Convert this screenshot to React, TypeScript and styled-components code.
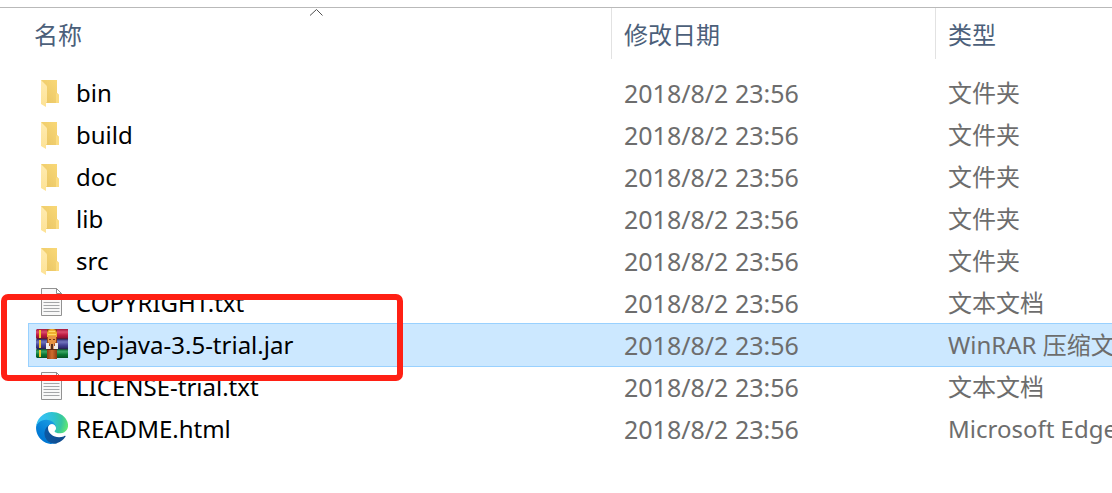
import React from 'react';
import styled, { createGlobalStyle } from 'styled-components';

const GlobalStyle = createGlobalStyle`
  * { box-sizing: border-box; }
  body {
    margin: 0;
    background: #fff;
    overflow-x: hidden;
    font-family: 'Noto Sans', 'Noto Sans CJK SC', sans-serif;
  }
`;

const Pane = styled.main`
  margin-top: 7px;
  padding-left: 29px;
  border-top: 1px solid #b9b9b9;
`;

const FileTable = styled.table`
  width: 100%;
  table-layout: fixed;
  border-collapse: collapse;
  font-size: 24px;
  line-height: 32px;
`;

const HeadCell = styled.th<{ $width?: number }>`
  position: relative;
  width: ${({ $width }) => ($width ? `${$width}px` : 'auto')};
  height: 64px;
  padding: 0;
  vertical-align: top;
  text-align: left;
`;

const HeadButton = styled.button<{ $indent: number; $divider?: boolean }>`
  display: block;
  width: 100%;
  height: 51px;
  padding: 2px 0 0 ${({ $indent }) => $indent}px;
  border: 0;
  border-right: ${({ $divider }) => ($divider ? '1px solid #e2e2e2' : '0')};
  background: none;
  color: #4c607a;
  font: inherit;
  font-weight: 400;
  text-align: left;
  white-space: nowrap;
`;

const SortCaret = styled.svg`
  position: absolute;
  top: 0;
  left: 280px;
`;

const Row = styled.tr<{ $selected?: boolean }>`
  height: 42px;
  background: ${({ $selected }) => ($selected ? '#cce8ff' : 'transparent')};
  outline: ${({ $selected }) => ($selected ? '1px solid #99d1ff' : 'none')};
`;

const NameCell = styled.td`
  position: relative;
  padding: 0 0 0 7px;
  color: #000;
`;

const FileName = styled.div`
  display: flex;
  align-items: center;
  gap: 8px;
  white-space: nowrap;
`;

const DetailCell = styled.td`
  padding: 0 0 0 12px;
  overflow: hidden;
  color: #6d6d6d;
  white-space: nowrap;
`;

const DateCell = styled(DetailCell)`
  font-size: 25px;
`;

const Icon = styled.svg`
  flex: none;
  width: 32px;
  height: 32px;
  margin-bottom: 2px;
`;

const Marker = styled.div`
  position: absolute;
  z-index: 1;
  top: -30px;
  left: -28px;
  width: 402px;
  height: 87px;
  border: 6px solid #ff2014;
  border-radius: 7px;
  pointer-events: none;
`;

const FolderIcon = () => (
  <Icon viewBox="0 0 32 32" aria-hidden="true">
    <defs>
      <linearGradient id="folderBack" x1="0" y1="1" x2="1" y2="0">
        <stop offset="0" stopColor="#e8c463" />
        <stop offset="1" stopColor="#fad978" />
      </linearGradient>
      <linearGradient id="folderFront" x1="0" y1="0" x2="0" y2="1">
        <stop offset="0" stopColor="#ffebb0" />
        <stop offset="1" stopColor="#fde295" />
      </linearGradient>
    </defs>
    <path d="M5 4H21V17L23 19V27H6Z" fill="url(#folderBack)" />
    <path d="M21 17L23 19V27H20V18Z" fill="#fbdc82" />
    <path d="M5 4L10 9Q11 10 11 11V26L10 27V31L5 28Z" fill="url(#folderFront)" />
  </Icon>
);

const TextIcon = () => (
  <Icon viewBox="0 0 32 32" aria-hidden="true">
    <path d="M5.5 2.5H20.5L25.5 7.5V29.5H5.5Z" fill="#f8f8f8" stroke="#929292" />
    <path d="M20.5 2.5V7.5H25.5Z" fill="#fff" stroke="#8c8c8c" />
    <path d="M7.5 10.5H23.5M7.5 13.5H23.5M7.5 16.5H23.5M7.5 19.5H23.5M7.5 22.5H23.5M7.5 25.5H23.5" stroke="#a4a6a8" />
  </Icon>
);

const ArchiveIcon = () => (
  <Icon viewBox="0 0 32 32" aria-hidden="true">
    <defs>
      <linearGradient id="bookRed" x1="0" y1="0" x2="0" y2="1">
        <stop offset="0" stopColor="#a3183c" /><stop offset=".3" stopColor="#dc4a6c" /><stop offset=".6" stopColor="#bd1b42" /><stop offset="1" stopColor="#7c1030" />
      </linearGradient>
      <linearGradient id="bookBlue" x1="0" y1="0" x2="0" y2="1">
        <stop offset="0" stopColor="#3a3680" /><stop offset=".3" stopColor="#7274bd" /><stop offset=".6" stopColor="#464497" /><stop offset="1" stopColor="#28215f" />
      </linearGradient>
      <linearGradient id="bookGreen" x1="0" y1="0" x2="0" y2="1">
        <stop offset="0" stopColor="#0a6a33" /><stop offset=".3" stopColor="#3aa463" /><stop offset=".6" stopColor="#0b7a37" /><stop offset="1" stopColor="#075024" />
      </linearGradient>
      <linearGradient id="strap" x1="0" y1="0" x2="1" y2="0">
        <stop offset="0" stopColor="#8f3f14" /><stop offset=".5" stopColor="#cf6c2e" /><stop offset="1" stopColor="#8a3b12" />
      </linearGradient>
    </defs>
    <path d="M1 1H32V11H1L0 10V2Z" fill="url(#bookRed)" />
    <path d="M1 11H32V21H1L0 20V12Z" fill="url(#bookBlue)" />
    <path d="M1 21H32V30H1L0 29V22Z" fill="url(#bookGreen)" />
    <path d="M0 11H32M0 21H32" stroke="#291f35" strokeOpacity=".7" />
    <path d="M4 2V10M4 12V20M4 22V29" stroke="#f2c629" strokeWidth="2" />
    <path d="M11 1H21V31H11Z" fill="url(#strap)" />
    <path d="M11 9V5Q12 1 16 1Q20 1 21 5V9Z" fill="#efb02f" />
    <path d="M13 3.500H19M12 6.500H20" stroke="#ffd968" />
    <path d="M12 8H20V14L18 16H14L12 14Z" fill="#e89543" />
    <path d="M13 11.500H15M17 11.500H19" stroke="#6e3316" />
    <path d="M10 15H13V18H14V21H10ZM22 15H19V18H18V21H22Z" fill="#f1ece8" />
    <path d="M14 16H18V21H14Z" fill="#dca06c" />
    <path d="M16 16V21" stroke="#59301c" strokeWidth="2" />
    <path d="M11 21.500H21" stroke="#5d2a13" />
  </Icon>
);

const EdgeIcon = () => (
  <Icon viewBox="0 0 256 256" aria-hidden="true">
    <defs>
      <linearGradient id="edgeDark" gradientUnits="userSpaceOnUse" x1="59" y1="177" x2="237" y2="177">
        <stop offset="0" stopColor="#0c59a4" /><stop offset="1" stopColor="#114a8b" />
      </linearGradient>
      <linearGradient id="edgeBlue" gradientUnits="userSpaceOnUse" x1="141" y1="80" x2="42" y2="213">
        <stop offset="0" stopColor="#1b9de2" /><stop offset=".16" stopColor="#1595df" /><stop offset=".67" stopColor="#0680d7" /><stop offset="1" stopColor="#0078d4" />
      </linearGradient>
      <radialGradient id="edgeGreen" gradientUnits="userSpaceOnUse" cx="26" cy="60" r="240">
        <stop offset="0" stopColor="#35c1f1" /><stop offset=".2" stopColor="#34c1ed" /><stop offset=".5" stopColor="#2dc2d0" /><stop offset=".75" stopColor="#36c7a0" /><stop offset="1" stopColor="#66eb6e" />
      </radialGradient>
    </defs>
    <path d="M231 190.500c-3.400 1.800-6.900 3.400-10.500 4.700a102 102 0 0 1-35.900 6.400c-47.300 0-88.500-32.500-88.500-74.300 0-11.400 6.400-21.900 16.400-27.300-42.800 1.800-53.800 46.400-53.800 72.500 0 74 68.100 81.400 82.800 81.400 7.900 0 19.800-2.300 27-4.600l1.300-.4a128 128 0 0 0 66.600-52.800 4 4 0 0 0-5.400-5.600z" fill="url(#edgeDark)" />
    <path d="M105.700 241.400a79.200 79.200 0 0 1-22.700-21.300 80.700 80.700 0 0 1 29.500-120c3.200-1.500 8.500-4.100 15.600-4a32.400 32.400 0 0 1 25.700 13c4.100 5.500 6.400 12.100 6.500 18.900 0-.2 24.500-79.600-80-79.600-43.900 0-80 41.700-80 78.200 0 19.300 4.200 38.400 12.500 56a128 128 0 0 0 156.400 67.100 75.500 75.500 0 0 1-62.300-7.900z" fill="url(#edgeBlue)" />
    <path d="M152.300 148.900c-.9 1-3.400 2.500-3.400 5.700 0 2.600 1.700 5.200 4.800 7.300 14.400 10.100 41.700 8.700 41.800 8.700 10.700 0 21.300-2.900 30.500-8.300a61.900 61.900 0 0 0 30.400-53.300c.3-22.400-8-37.300-11.300-43.900C223.800 23.900 177.700 0 127.600 0 57.100 0 .2 57.200.2 127.700c.5-36.500 36.800-66 80-66 3.500 0 23.500.3 42 10.100 16.300 8.600 24.900 19 30.800 29.300 6.200 10.700 7.300 24.100 7.300 29.500 0 5.300-2.700 13.300-8 18.300z" fill="url(#edgeGreen)" />
  </Icon>
);

const icons = { folder: FolderIcon, text: TextIcon, archive: ArchiveIcon, edge: EdgeIcon };

type FileEntry = { name: string; type: string; icon: keyof typeof icons; selected?: boolean };

const modified = '2018/8/2 23:56';

const files: FileEntry[] = [
  { name: 'bin', type: '文件夹', icon: 'folder' },
  { name: 'build', type: '文件夹', icon: 'folder' },
  { name: 'doc', type: '文件夹', icon: 'folder' },
  { name: 'lib', type: '文件夹', icon: 'folder' },
  { name: 'src', type: '文件夹', icon: 'folder' },
  { name: 'COPYRIGHT.txt', type: '文本文档', icon: 'text' },
  { name: 'jep-java-3.5-trial.jar', type: 'WinRAR 压缩文件', icon: 'archive', selected: true },
  { name: 'LICENSE-trial.txt', type: '文本文档', icon: 'text' },
  { name: 'README.html', type: 'Microsoft Edge', icon: 'edge' },
];

export default function App() {
  return (
    <>
      <GlobalStyle />
      <Pane lang="zh-CN">
        <FileTable>
          <thead>
            <tr>
              <HeadCell $width={583} scope="col" aria-sort="ascending">
                <HeadButton type="button" $indent={5} $divider>名称</HeadButton>
                <SortCaret width="14" height="9" viewBox="0 0 14 9" aria-hidden="true">
                  <path d="M1 7.500L7.500 1.500L13.500 7.500" fill="none" stroke="#505050" />
                </SortCaret>
              </HeadCell>
              <HeadCell $width={324} scope="col">
                <HeadButton type="button" $indent={12} $divider>修改日期</HeadButton>
              </HeadCell>
              <HeadCell scope="col">
                <HeadButton type="button" $indent={12}>类型</HeadButton>
              </HeadCell>
            </tr>
          </thead>
          <tbody>
            {files.map(({ name, type, icon, selected }) => {
              const FileIcon = icons[icon];
              return (
                <Row key={name} $selected={selected} aria-selected={selected}>
                  <NameCell>
                    <FileName>
                      <FileIcon />
                      <span>{name}</span>
                    </FileName>
                    {selected && <Marker />}
                  </NameCell>
                  <DateCell>{modified}</DateCell>
                  <DetailCell>{type}</DetailCell>
                </Row>
              );
            })}
          </tbody>
        </FileTable>
      </Pane>
    </>
  );
}
